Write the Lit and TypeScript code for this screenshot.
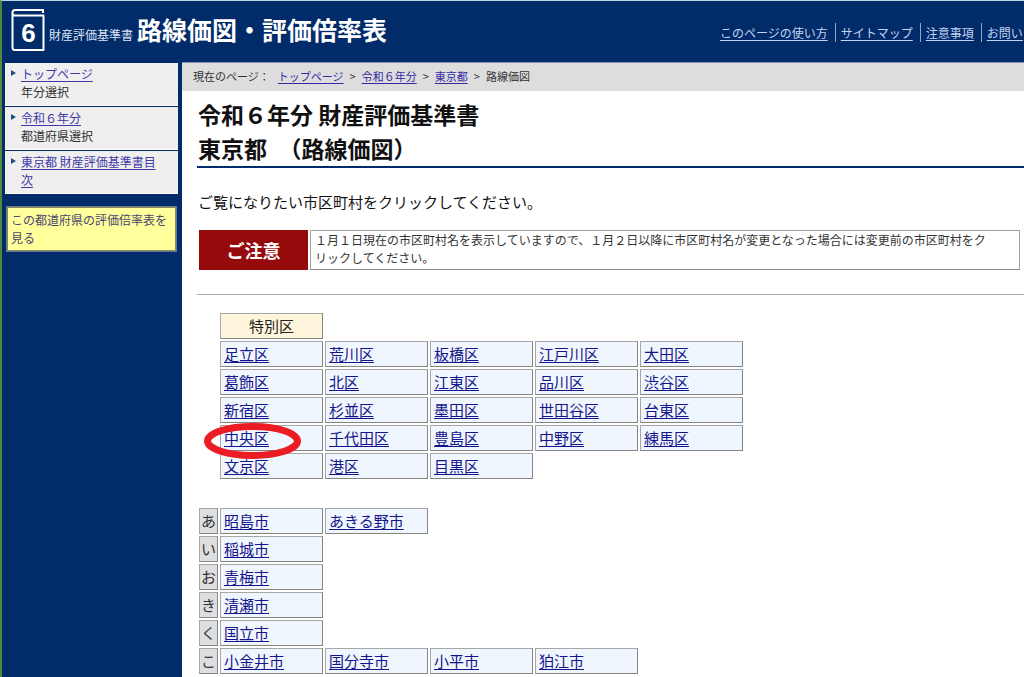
import { LitElement, html, css, nothing } from "lit";
import { customElement, property } from "lit/decorators.js";

const WARDS = [
  ["足立区", "荒川区", "板橋区", "江戸川区", "大田区"],
  ["葛飾区", "北区", "江東区", "品川区", "渋谷区"],
  ["新宿区", "杉並区", "墨田区", "世田谷区", "台東区"],
  ["中央区", "千代田区", "豊島区", "中野区", "練馬区"],
  ["文京区", "港区", "目黒区"],
];

const CITIES: [string, string[]][] = [
  ["あ", ["昭島市", "あきる野市"]],
  ["い", ["稲城市"]],
  ["お", ["青梅市"]],
  ["き", ["清瀬市"]],
  ["く", ["国立市"]],
  ["こ", ["小金井市", "国分寺市", "小平市", "狛江市"]],
];

@customElement("site-header")
class SiteHeader extends LitElement {
  static styles = css`
    :host { display: flex; align-items: flex-start; justify-content: space-between; height: 61px; color: #fff; }
    .brand { display: flex; align-items: center; padding: 7px 0 0 9px; white-space: nowrap; }
    .logo { display: block; width: 34px; height: 44px; margin-right: 4px; }
    .sub { font-size: 12px; padding-top: 8px; color: #dfe6f5; }
    .title { font-size: 25px; font-weight: 700; margin: 0; line-height: 36px; padding: 0 0 2px 4px; }
    .nav { flex: 0 0 304px; display: flex; white-space: nowrap; font-size: 12px; line-height: 19px; padding-top: 22px; }
    .item { padding: 0 7px 0 5px; border-left: 1px solid #8fa3cc; }
    .item:first-child { border-left: 0; padding-left: 0; }
    .item:last-child { padding-right: 0; }
    .item a { color: #c3d3f2; text-underline-offset: 2px; }
  `;
  render() {
    return html`
      <div class="brand">
        <svg class="logo" viewBox="0 0 34 44" aria-hidden="true">
          <path d="M33 2H4Q1.500 2 1.500 4.500V39.500Q1.500 42 4 42H32.500V7.500H4Q1.500 7.500 1.500 5M32 2.500V5" fill="none" stroke="#fff" stroke-width="2" stroke-linejoin="round" />
          <text x="17.500" y="34" text-anchor="middle" fill="#fff" font-family="Liberation Sans Narrow, Liberation Sans, sans-serif" font-size="26" font-weight="700">6</text>
        </svg>
        <span class="sub">財産評価基準書</span>
        <h1 class="title">路線価図・評価倍率表</h1>
      </div>
      <nav class="nav">
        ${["このページの使い方", "サイトマップ", "注意事項", "お問い"].map(
          (t) => html`<span class="item"><a href="#">${t}</a></span>`
        )}
      </nav>
    `;
  }
}

@customElement("side-menu")
class SideMenu extends LitElement {
  static styles = css`
    :host { display: block; font-size: 12px; line-height: 18px; }
    .list { list-style: none; margin: 0; padding: 0; }
    .entry { position: relative; background: #efefef; color: #333; padding: 2px 16px 4px; margin-bottom: 1px; border-bottom: 1px solid #fff; }
    .entry::before { content: ""; position: absolute; left: 6px; top: 7px; border: 3px solid transparent; border-left: 5px solid #1c4f86; border-right: 0; }
    .entry a { color: #4038a8; text-underline-offset: 2px; }
    .switch { display: block; margin: 13px 2px 0; padding: 3px; border: 1px solid #8a8a50; outline: 1px solid #6a78a0; background: #ffff9c; color: #4a4670; text-decoration: none; }
  `;
  render() {
    return html`
      <ul class="list">
        <li class="entry"><a href="#">トップページ</a><br />年分選択</li>
        <li class="entry"><a href="#">令和６年分</a><br />都道府県選択</li>
        <li class="entry"><a href="#">東京都 財産評価基準書目<br />次</a></li>
      </ul>
      <a class="switch" href="#">この都道府県の評価倍率表を<br />見る</a>
    `;
  }
}

@customElement("city-table")
class CityTable extends LitElement {
  @property() caption = "";
  @property() marked = "";
  @property({ attribute: false }) rows: [string, string[]][] = [];

  static styles = css`
    :host { display: block; }
    .grid { table-layout: fixed; border-spacing: 2px; font-size: 15px; line-height: 22px; }
    .grid th, .grid td { box-sizing: border-box; height: 26px; padding: 0; font-weight: 400; white-space: nowrap; }
    .kana { width: 19px; text-align: center; }
    .name { width: 103px; }
    .grid .box { border: 1px solid #a6a6a6; border-right-color: #858585; border-bottom-color: #858585; }
    .grid .head { background: #fff5dc; color: #222; }
    .grid .index { background: #dedede; color: #333; }
    .grid .city { position: relative; background: #f0f6fd; padding: 0 3px; }
    .city a { color: #14148c; text-underline-offset: 2px; }
    .ring { position: absolute; left: -18px; top: -4px; width: 99px; height: 38px; pointer-events: none; z-index: 1; }
  `;
  render() {
    return html`
      <table class="grid">
        <colgroup><col class="kana" />${[1, 2, 3, 4, 5].map(() => html`<col class="name" />`)}</colgroup>
        <tbody>
          ${this.caption ? html`<tr><td></td><th class="box head" scope="col">${this.caption}</th></tr>` : nothing}
          ${this.rows.map(
            ([kana, cities]) => html`<tr>
              ${kana ? html`<th class="box index kana" scope="row">${kana}</th>` : html`<td class="kana"></td>`}
              ${cities.map(
                (c) => html`<td class="box city name"><a href="#">${c}</a>${c === this.marked
                  ? html`<svg class="ring" viewBox="0 0 99 38" aria-hidden="true"><ellipse cx="49.500" cy="19" rx="45" ry="14.500" fill="none" stroke="#ec1c24" stroke-width="7" /></svg>`
                  : nothing}</td>`
              )}
            </tr>`
          )}
        </tbody>
      </table>
    `;
  }
}

@customElement("app-root")
class AppRoot extends LitElement {
  static styles = css`
    :host { display: block; box-sizing: border-box; height: 100vh; overflow: hidden; background: #022b69; border-top: 1px solid #b9d8e6; border-left: 2px solid #4f8a3c; font-family: "Noto Sans CJK JP", sans-serif; }
    .columns { display: grid; grid-template-columns: 173px minmax(0, 1fr); gap: 4px; padding-left: 3px; }
    .side { padding-top: 1px; }
    .main { background: #fff; min-height: 100vh; color: #111; border-top: 1px solid #8093b4; }
    .crumbs { background: #ddd; font-size: 11px; line-height: 26px; padding: 0 0 2px 11px; color: #333; display: flex; gap: 6px; white-space: nowrap; }
    .crumbs a { color: #3229a3; text-underline-offset: 2px; }
    .here { margin-right: 2px; }
    .content { padding-left: 15px; }
    .heading { margin: 0; padding: 6px 0 1px 1px; font-size: 23px; line-height: 34px; font-weight: 700; border-bottom: 2px solid #022b69; }
    .lead { margin: 0; padding: 23px 0 0 1px; font-size: 15px; line-height: 22px; }
    .notice { display: flex; gap: 2px; margin: 17px 4px 0 2px; }
    .label { flex: 0 0 109px; display: flex; align-items: center; justify-content: center; background: #960a0c; color: #fff; font-size: 18px; font-weight: 700; }
    .text { flex: 1; border: 1px solid #a0a0a0; border-bottom-color: #858585; font-size: 12px; line-height: 18px; padding: 0 0 2px 4px; color: #333; }
    .rule { border: 0; border-top: 1px solid #aaa; margin: 24px 0 16px; }
    .cities { margin-top: 25px; }
  `;
  render() {
    return html`
      <site-header></site-header>
      <div class="columns">
        <side-menu class="side"></side-menu>
        <main class="main">
          <nav class="crumbs">
            <span class="here">現在のページ：</span>
            <a href="#">トップページ</a><span>&gt;</span>
            <a href="#">令和６年分</a><span>&gt;</span>
            <a href="#">東京都</a><span>&gt;</span><span>路線価図</span>
          </nav>
          <div class="content">
            <h2 class="heading">令和６年分 財産評価基準書<br />東京都　（路線価図）</h2>
            <p class="lead">ご覧になりたい市区町村をクリックしてください。</p>
            <div class="notice">
              <strong class="label">ご注意</strong>
              <div class="text">１月１日現在の市区町村名を表示していますので、１月２日以降に市区町村名が変更となった場合には変更前の市区町村をク<br />リックしてください。</div>
            </div>
            <hr class="rule" />
            <city-table caption="特別区" marked="中央区" .rows=${WARDS.map((w) => ["", w])}></city-table>
            <city-table class="cities" .rows=${CITIES}></city-table>
          </div>
        </main>
      </div>
    `;
  }
}
